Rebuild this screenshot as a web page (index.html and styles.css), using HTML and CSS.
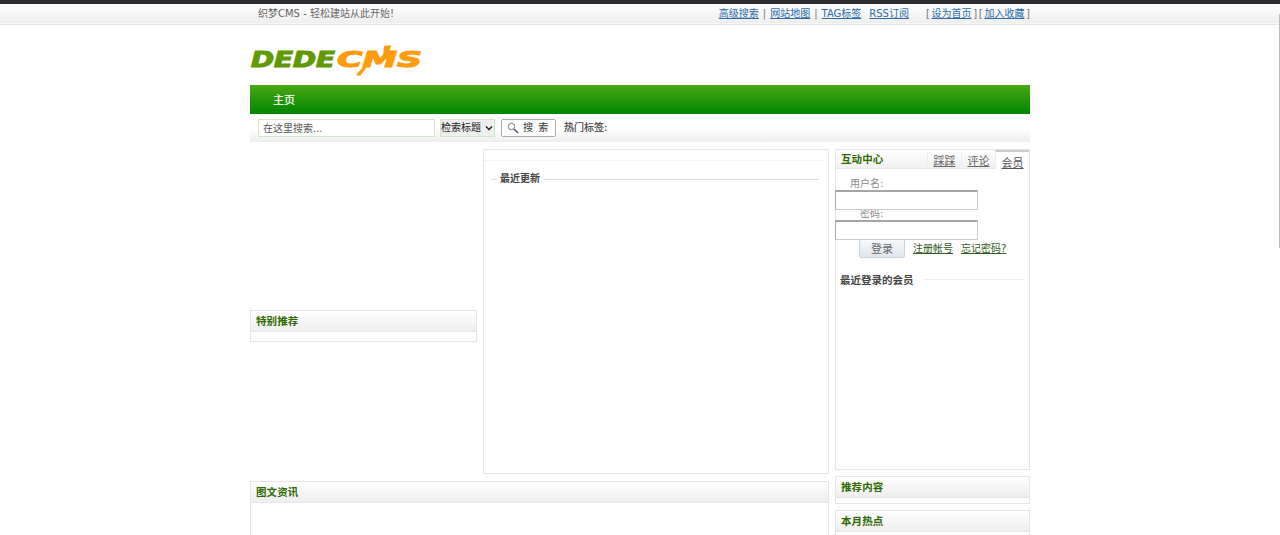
FILE: index.html
```html
<!DOCTYPE html>
<html lang="zh-CN">
<head>
<meta charset="utf-8">
<title>织梦CMS</title>
<link rel="stylesheet" href="styles.css">
</head>
<body>
<div class="thumb"></div>
<div class="topbar">
  <div class="wrap top-inner">
    <span class="welcome">织梦CMS - 轻松建站从此开始!</span>
    <div class="toplinks">
      <a href="#">高级搜索</a><i>|</i><a href="#">网站地图</a><i>|</i><a href="#">TAG标签</a><a class="rss" href="#">RSS订阅</a>
      <span class="fav">[ <a href="#">设为首页</a> ] [ <a href="#">加入收藏</a> ]</span>
    </div>
  </div>
</div>
<div class="wrap">
  <div class="logo">
    <svg class="logo-svg" width="176" height="36" viewBox="0 0 176 36">
      <text class="dede" x="1" y="25" textLength="84" lengthAdjust="spacingAndGlyphs">DEDE</text>
      <text class="cms" x="87" y="25" textLength="85" lengthAdjust="spacingAndGlyphs">CMS</text>
      <path class="spike" d="M106 33l11-13 2 2-9 12zM134 4l7-1-3 11-5 0z"/>
    </svg>
  </div>
  <nav class="nav"><a href="#">主页</a></nav>
  <div class="search">
    <div class="kw">在这里搜索...</div>
    <div class="sel">检索标题<svg width="8" height="6" viewBox="0 0 8 6"><path d="M1 1.5l3 3 3-3" fill="none" stroke="#222" stroke-width="1.5"/></svg></div>
    <div class="go"><svg width="12" height="12" viewBox="0 0 12 12"><circle cx="4.5" cy="4.5" r="3.2" fill="none" stroke="#777" stroke-width="1"/><path d="M7 7l4 4" stroke="#555" stroke-width="1.6"/></svg><span>搜 索</span></div>
    <div class="hot">热门标签:</div>
  </div>
  <div class="main">
    <div class="left">
      <section class="box spec"><h2>特别推荐</h2><div class="bd9"></div></section>
    </div>
    <div class="mid">
      <div class="dots"></div>
      <div class="legend"><b>最近更新</b></div>
    </div>
    <div class="right">
      <section class="box member">
        <div class="tabs">
          <h2>互动中心</h2>
          <div class="tab-list"><a href="#">踩踩</a><a href="#">评论</a><a class="on" href="#">会员</a></div>
        </div>
        <form class="login">
          <label class="l1">用户名:</label>
          <div class="ipt"></div>
          <label class="l2">密码:</label>
          <div class="ipt"></div>
          <div class="actions"><div class="btn">登录</div><a href="#">注册帐号</a><a href="#">忘记密码?</a></div>
        </form>
        <div class="recent"><b>最近登录的会员</b></div>
      </section>
    </div>
  </div>
  <div class="lower">
    <section class="box pics"><h2>图文资讯</h2><div class="bd"></div></section>
    <div class="side">
      <section class="box"><h2>推荐内容</h2><div class="bd5"></div></section>
      <section class="box"><h2>本月热点</h2><div class="bd"></div></section>
    </div>
  </div>
</div>
</body>
</html>
```
FILE: styles.css
```css
* { box-sizing: border-box; }
html, body { margin: 0; padding: 0; height: 535px; overflow: hidden; background: #fff; }
body { font: 10px/18px "DejaVu Sans", "Noto Sans CJK SC", sans-serif; color: #444; }
a { color: #2a6ca8; }
h2 { margin: 0; font-size: 10.5px; font-weight: bold; color: #2f6a00; }
.thumb { position: absolute; top: 14px; right: 0; width: 1px; height: 234px; background: #bbb; }
.wrap { width: 780px; margin: 0 auto 0 250px; }
.topbar { height: 25px; border-top: 4px solid #2b2b30; border-bottom: 1px solid #e5e5e5; background: linear-gradient(#fff, #eee 95%, #fff); }
.top-inner { display: flex; justify-content: space-between; height: 20px; align-items: center; padding: 0 0 0 8px; }
.welcome { color: #666; }
.toplinks { display: flex; color: #777; }
.toplinks i { font-style: normal; margin: 0 4px; }
.toplinks .rss { margin-left: 8px; }
.fav { margin-left: 17px; word-spacing: -1.5px; }
.logo { height: 60px; padding-top: 17px; }
.logo-svg { display: block; }
.logo-svg text { font: italic bold 21px "DejaVu Sans", sans-serif; stroke-width: 1.1px; }
.dede { fill: #5f9a00; stroke: #5f9a00; }
.cms { fill: #ff9c0c; stroke: #ff9c0c; }
.spike { fill: #ff9c0c; }
.nav { height: 29px; background: linear-gradient(#4aa714, #008600); padding-left: 23px; }
.nav a { color: #fff; font: 11px/30px "Liberation Serif", "Noto Sans CJK SC", serif; -webkit-text-stroke: .2px #fff; text-decoration: none; }
.search { height: 28px; display: flex; align-items: center; padding: 0 0 1px 8px; background: linear-gradient(#fff 50%, #eee); }
.kw { width: 177px; height: 18px; border: 1px solid #cfe6c4; background: #fff; padding-left: 4px; line-height: 17px; color: #555; }
.sel { width: 55px; height: 18px; margin-left: 5px; border: 1px solid #cfe6c4; background: #eee; display: flex; align-items: center; gap: 4px; color: #222; }
.go { width: 55px; height: 18px; margin-left: 6px; border: 1px solid #aaa; border-radius: 2px; background: #fff; display: flex; align-items: center; gap: 4px; padding-left: 5px; color: #333; word-spacing: 2px; }
.go span { white-space: pre; }
.hot { margin-left: 8px; color: #444; -webkit-text-stroke: .2px #444; }
.main { display: flex; margin-top: 7px; height: 325px; align-items: flex-start; }
.left { width: 227px; padding-top: 161px; }
.mid { width: 346px; height: 325px; margin-left: 6px; border: 1px solid #e6e6e6; }
.dots { height: 11px; border-bottom: 1px dotted #eee; }
.legend { margin: 18px 9px 0 7px; border-top: 1px solid #ddd; height: 1px; position: relative; }
.legend b { position: absolute; top: -10px; left: 6px; padding: 0 4px 0 3px; background: #fff; color: #444; }
.right { width: 195px; margin-left: 6px; }
.box { border: 1px solid #e6e6e6; }
.box h2 { height: 21px; line-height: 21px; padding-left: 5px; background: linear-gradient(#fff, #eee); border-bottom: 1px solid #e6e6e6; letter-spacing: .1px; }
.lower .box h2 { line-height: 20px; }
.bd9 { height: 9px; }
.bd5 { height: 5px; }
.member { height: 321px; }
.tabs { display: flex; height: 19px; background: linear-gradient(#fff, #f0f0f0); border-bottom: 1px solid #e6e6e6; justify-content: space-between; }
.box .tabs h2 { height: 19px; background: none; border: 0; line-height: 18px; }
.tab-list { display: flex; align-items: flex-end; }
.tab-list a { width: 34px; height: 17px; line-height: 21px; text-align: center; font-size: 11px; color: #666; border-left: 1px solid #eee; }
.tab-list a.on { height: 19px; margin-bottom: -1px; background: #fff; border-top: 2px solid #ccc; color: #555; line-height: 24px; }
.login { display: block; color: #888; }
.login label { display: block; height: 21px; padding-top: 9px; line-height: 12px; margin-left: 14px; }
.login .l2 { margin-left: 24px; height: 10px; padding-top: 0; line-height: 8px; }
.ipt { width: 143px; height: 20px; margin-left: -1px; position: relative; border: 1px solid #ccc; border-top: 2px solid #a5a5a5; border-left-color: #a5a5a5; background: #fff; }
.actions { display: flex; align-items: center; padding-left: 23px; height: 19px; margin-top: -1px; }
.btn { width: 46px; height: 19px; border: 1px solid #c5d4e0; border-radius: 2px; background: linear-gradient(#f6f8fa, #dfe6ec); text-align: center; font-size: 11px; line-height: 20px; color: #666; margin-right: 8px; }
.actions a { color: #2f5a1a; margin-right: 8px; }
.recent { margin: 21px 5px 0 4px; height: 1px; border-top: 1px solid #eee; position: relative; }
.recent b { position: absolute; top: -9px; left: 0; background: #fff; padding-right: 9px; font-size: 10.5px; color: #444; }
.lower { display: flex; justify-content: space-between; margin-top: 7px; align-items: flex-start; }
.pics { width: 579px; }
.pics .bd { height: 60px; }
.side { width: 195px; margin-top: -5px; display: flex; flex-direction: column; gap: 6px; }
.side .bd { height: 60px; }
```
